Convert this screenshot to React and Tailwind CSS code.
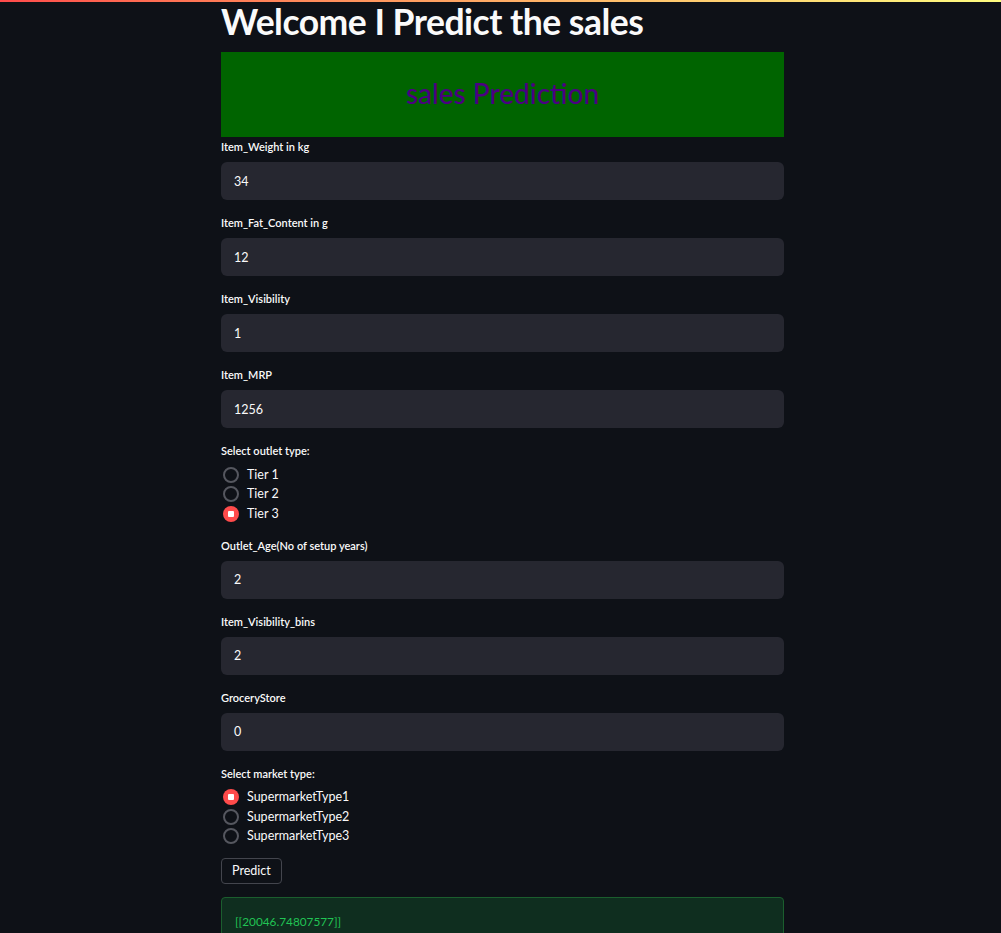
import React from "react";

const font = { fontFamily: "Lato, 'Open Sans', sans-serif" };

function Field({ label, value }) {
  return (
    <div className="mb-[13px]">
      <div className="h-[25px] text-[11px] font-semibold leading-[20px] text-[#fafafa]">{label}</div>
      <div className="flex h-[38px] items-center rounded-[6px] bg-[#262730] px-[13px] pt-[2px] text-[12.5px] text-[#fafafa]">
        {value}
      </div>
    </div>
  );
}

function Radio({ label, checked }) {
  return (
    <div className="flex h-[19.5px] items-center gap-2 pl-[2px]">
      {checked ? (
        <span className="grid h-4 w-4 place-items-center rounded-full bg-[#ff4b4b]">
          <span className="h-[6px] w-[6px] rounded-[1px] bg-white" />
        </span>
      ) : (
        <span className="h-4 w-4 rounded-full border-2 border-[#55575f]" />
      )}
      <span className="pt-[1px] text-[12.5px] text-[#fafafa]">{label}</span>
    </div>
  );
}

function RadioGroup({ label, options, selected }) {
  return (
    <div className="mb-[12px]">
      <div className="h-[24px] text-[11px] font-semibold leading-[20px] text-[#fafafa]">{label}</div>
      {options.map((o) => (
        <Radio key={o} label={o} checked={o === selected} />
      ))}
    </div>
  );
}

export default function App() {
  return (
    <div className="min-h-[933px] bg-[#0e1117]" style={font}>
      <div className="h-[2px] bg-gradient-to-r from-[#ff4b4b] to-[#fffd80]" />
      <div className="ml-[221px] w-[563px]">
        <h1 className="h-[50px] text-[35.5px] font-bold leading-[40px] tracking-[-0.5px] text-[#fafafa]">
          Welcome I Predict the sales
        </h1>
        <div className="flex h-[85px] items-center justify-center bg-[#006400] pb-[3px]">
          <span className="text-[28px] font-medium text-[#4b0082]">sales Prediction</span>
        </div>
        <Field label="Item_Weight in kg" value="34" />
        <Field label="Item_Fat_Content in g" value="12" />
        <Field label="Item_Visibility" value="1" />
        <Field label="Item_MRP" value="1256" />
        <RadioGroup label="Select outlet type:" options={["Tier 1", "Tier 2", "Tier 3"]} selected="Tier 3" />
        <Field label="Outlet_Age(No of setup years)" value="2" />
        <Field label="Item_Visibility_bins" value="2" />
        <Field label="GroceryStore" value="0" />
        <RadioGroup
          label="Select market type:"
          options={["SupermarketType1", "SupermarketType2", "SupermarketType3"]}
          selected="SupermarketType1"
        />
        <button className="block h-[26px] rounded-[4px] border border-[#43454d] px-[10px] text-[12.5px] text-[#fafafa]">
          Predict
        </button>
        <div className="mt-[13px] h-[60px] rounded-[4px] border border-[#1b5e2e] bg-[#0f2e1f] px-[13px] pt-[15px] text-[11.8px] text-[#21c354]">
          [[20046.74807577]]
        </div>
      </div>
    </div>
  );
}
